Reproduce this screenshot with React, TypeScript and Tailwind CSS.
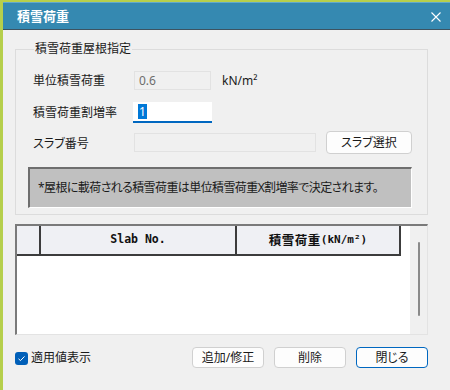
import React from "react";

const F = "font-['Noto_Sans','Noto_Sans_CJK_JP',sans-serif] [font-feature-settings:'palt']";

function Btn({ children, primary }: { children: React.ReactNode; primary?: boolean }) {
  return (
    <div
      className={`w-[72px] h-[21px] flex items-center justify-center rounded-[4px] border text-[12px] text-[#1a1a1a] ${
        primary ? "border-[#0067c0] bg-[#fdfdfd]" : "border-[#d0d0d0] bg-[#fdfdfd]"
      }`}
    >
      {children}
    </div>
  );
}

export default function App() {
  return (
    <div className={`w-[450px] h-[390px] overflow-hidden flex flex-col bg-[#b6cf4c] pt-[2px] pl-[3px] ${F}`}>
      <div className="flex-1 flex flex-col bg-[#f0f0f0]">
        {/* title bar */}
        <div className="h-[28px] shrink-0 flex items-center justify-between bg-[#3589b1] border-t border-t-[#62a9cc] border-b border-b-[#3d5361] pl-[14px] pr-[9px]">
          <span className="text-white text-[13px] font-bold leading-none">積雪荷重</span>
          <svg width="10" height="10" viewBox="0 0 10 10" className="mt-[1px]">
            <path d="M0.5 0.5 L9.5 9.5 M9.5 0.5 L0.5 9.5" stroke="#ffffff" strokeWidth="1.1" />
          </svg>
        </div>

        {/* body */}
        <div className="flex flex-col pl-[12px] pt-[11px]">
          <fieldset className="w-[413px] border border-[#dcdcdc] pl-[12px] pb-[6px]">
            <legend className="ml-[6px] px-[1px] text-[12px] leading-[16px] text-[#1a1a1a]">積雪荷重屋根指定</legend>

            <div className="flex flex-col mt-[14px]">
              <div className="flex items-center h-[19px] pl-[5px]">
                <span className="w-[101px] text-[12px] text-[#1a1a1a]">単位積雪荷重</span>
                <div className="w-[77px] h-[19px] border border-[#e2e2e2] bg-[#f0f0f0] flex items-center pl-[4px] text-[12px] text-[#6d6d6d]">
                  0.6
                </div>
                <span className="ml-[11px] text-[12px] text-[#1a1a1a]">kN/m²</span>
              </div>

              <div className="flex items-center h-[21px] mt-[12px] pl-[5px]">
                <span className="w-[100px] text-[12px] text-[#1a1a1a]">積雪荷重割増率</span>
                <div className="w-[79px] h-[21px] bg-white border-b-2 border-[#0067c0] flex items-center pl-[5px]">
                  <span className="bg-[#0078d7] text-white text-[12px] leading-[15px] px-[1px]">1</span>
                </div>
              </div>

              <div className="flex items-center h-[23px] mt-[8px] pl-[5px]">
                <span className="w-[101px] text-[12px] text-[#1a1a1a] mt-[2px]">スラブ番号</span>
                <div className="w-[182px] h-[19px] border border-[#e2e2e2] bg-[#f0f0f0]" />
                <div className="ml-[10px] w-[86px] h-[23px] flex items-center justify-center rounded-[4px] border border-[#d0d0d0] bg-[#fdfdfd] text-[12px] text-[#1a1a1a]">
                  スラブ選択
                </div>
              </div>

              <div className="mt-[13px] w-[384px] h-[41px] bg-[#c0c0c0] border-t-2 border-l-2 border-[#6e6e6e] border-r border-b border-r-white border-b-white flex items-center pl-[8px] text-[12px] tracking-[-0.6px] text-[#1a1a1a] whitespace-nowrap">
                *屋根に載荷される積雪荷重は単位積雪荷重X割増率で決定されます。
              </div>
            </div>
          </fieldset>

          {/* table */}
          <div className="mt-[9px] w-[413px] h-[111px] flex border-t-2 border-l-2 border-t-[#7a7a7a] border-l-[#7a7a7a] border-r border-b border-r-[#e3e3e3] border-b-[#e3e3e3] bg-white">
            <div className="flex-1 flex flex-col">
              <div className="flex h-[30px] w-[384px] bg-[#eff0f4]">
                <div className="w-[24px] border-r-2 border-b-2 border-[#3c3c3c]" />
                <div className="w-[196px] border-r-2 border-b-2 border-[#3c3c3c] flex items-center justify-center font-['DejaVu_Sans_Mono',monospace] font-bold text-[11.5px] text-[#111]">
                  Slab No.
                </div>
                <div className="flex-1 border-r-2 border-b-2 border-[#3c3c3c] flex items-center justify-center font-bold text-[#111]">
                  <span className="text-[12.5px] font-['Noto_Sans_CJK_JP',sans-serif] tracking-[0.5px]">積雪荷重</span>
                  <span className="text-[11px] font-['DejaVu_Sans_Mono',monospace]">(kN/m²)</span>
                </div>
              </div>
            </div>
            <div className="w-[17px] bg-[#f0f0f0] flex justify-center pt-[16px]">
              <div className="w-[2px] h-[74px] bg-[#8a8a8a] rounded-full" />
            </div>
          </div>

          {/* footer */}
          <div className="mt-[12px] w-[413px] h-[21px] flex items-center">
            <div className="w-[13px] h-[13px] rounded-[3px] bg-[#005fb8] flex items-center justify-center mt-[1px]">
              <svg width="9" height="9" viewBox="0 0 9 9">
                <path d="M1.5 4.8 L3.5 6.6 L7.5 2.4" stroke="#ffffff" strokeWidth="1" fill="none" />
              </svg>
            </div>
            <span className="ml-[3px] text-[12px] text-[#1a1a1a]">適用値表示</span>
            <div className="ml-auto flex gap-[10px]">
              <Btn>追加/修正</Btn>
              <Btn>削除</Btn>
              <Btn primary>閉じる</Btn>
            </div>
          </div>
        </div>
      </div>
    </div>
  );
}
